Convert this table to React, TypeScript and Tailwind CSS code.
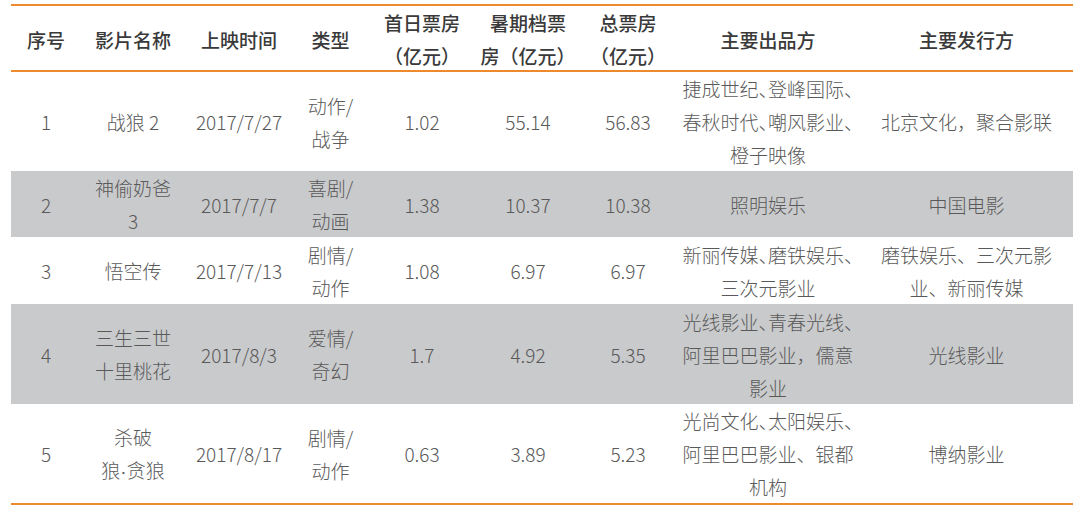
import React from "react";

const COLS = "grid grid-cols-[70px_104px_108px_75px_108px_104px_96px_184px_213px]";

type Cell = string | string[];

// "§" marks a half-width 、 (the reference sets some of them tight)
const HEADER: Cell[] = [
  "序号",
  "影片名称",
  "上映时间",
  "类型",
  ["首日票房", "（亿元）"],
  ["暑期档票", "房（亿元）"],
  ["总票房", "（亿元）"],
  "主要出品方",
  "主要发行方",
];

const ROWS: { height: string; gray: boolean; cells: Cell[] }[] = [
  {
    height: "h-[99px]",
    gray: false,
    cells: [
      "1",
      "战狼 2",
      "2017/7/27",
      ["动作/", "战争"],
      "1.02",
      "55.14",
      "56.83",
      ["捷成世纪§登峰国际§", "春秋时代§嘲风影业§", "橙子映像"],
      "北京文化，聚合影联",
    ],
  },
  {
    height: "h-[66px]",
    gray: true,
    cells: ["2", ["神偷奶爸", "3"], "2017/7/7", ["喜剧/", "动画"], "1.38", "10.37", "10.38", "照明娱乐", "中国电影"],
  },
  {
    height: "h-[67px]",
    gray: false,
    cells: [
      "3",
      "悟空传",
      "2017/7/13",
      ["剧情/", "动作"],
      "1.08",
      "6.97",
      "6.97",
      ["新丽传媒§磨铁娱乐§", "三次元影业"],
      ["磨铁娱乐、三次元影", "业、新丽传媒"],
    ],
  },
  {
    height: "h-[100px]",
    gray: true,
    cells: [
      "4",
      ["三生三世", "十里桃花"],
      "2017/8/3",
      ["爱情/", "奇幻"],
      "1.7",
      "4.92",
      "5.35",
      ["光线影业§青春光线§", "阿里巴巴影业，儒意", "影业"],
      "光线影业",
    ],
  },
  {
    height: "h-[99px]",
    gray: false,
    cells: [
      "5",
      ["杀破", "狼·贪狼"],
      "2017/8/17",
      ["剧情/", "动作"],
      "0.63",
      "3.89",
      "5.23",
      ["光尚文化§太阳娱乐§", "阿里巴巴影业、银都", "机构"],
      "博纳影业",
    ],
  },
];

function Line({ text }: { text: string }) {
  const parts = text.split(/([§·])/);
  return (
    <span className="whitespace-nowrap">
      {parts.map((p, i) =>
        p === "§" ? (
          <span key={i} className="[font-feature-settings:'halt']">
            、
          </span>
        ) : p === "·" ? (
          <span key={i} className="font-['Liberation_Sans',sans-serif]">
            ·
          </span>
        ) : (
          p
        ),
      )}
    </span>
  );
}

function Lines({ value }: { value: Cell }) {
  const lines = Array.isArray(value) ? value : [value];
  return (
    <div className="flex flex-col items-center justify-center text-center">
      {lines.map((line, i) => (
        <Line key={i} text={line} />
      ))}
    </div>
  );
}

export default function App() {
  return (
    <div className="h-[512px] w-[1080px] bg-white pt-[4px] pl-[11px] font-['Noto_Sans_CJK_SC','Noto_Sans',sans-serif] text-[19px] leading-[33px]">
      <div className="w-[1062px] border-y-2 border-[#ec8a2d]">
        <div className={`${COLS} h-[66px] border-b-2 border-[#ec8a2d] font-medium text-[#3a3a3a]`}>
          {HEADER.map((cell, i) => (
            <div key={i} className="flex items-center justify-center">
              <Lines value={cell} />
            </div>
          ))}
        </div>

        {ROWS.map((row, r) => (
          <div
            key={r}
            className={`${COLS} ${row.height} ${row.gray ? "bg-[#c9cacc]" : "bg-white"} font-light text-[#595959]`}
          >
            {row.cells.map((cell, i) => (
              <div key={i} className="flex items-center justify-center">
                <Lines value={cell} />
              </div>
            ))}
          </div>
        ))}
      </div>
    </div>
  );
}
